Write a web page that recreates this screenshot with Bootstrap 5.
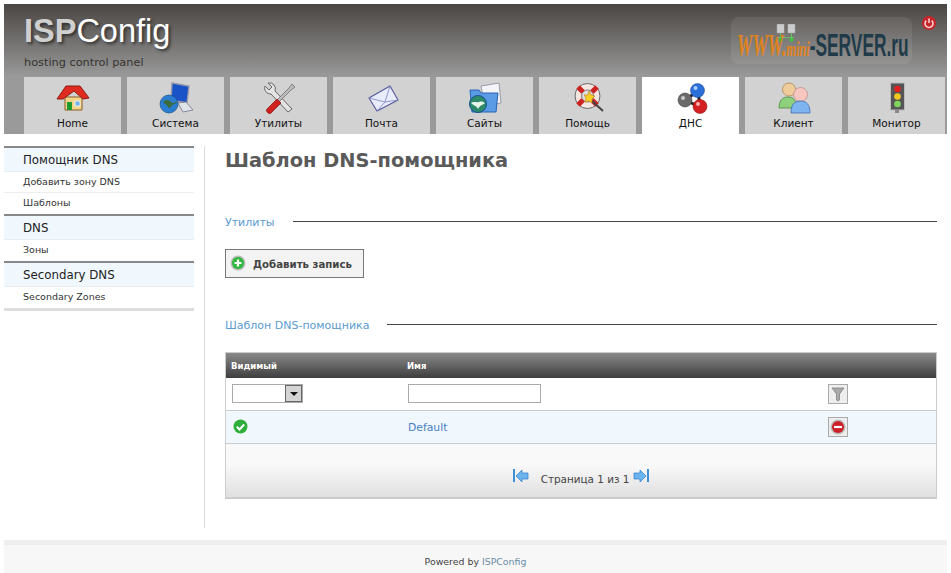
<!DOCTYPE html>
<html lang="ru">

<head>
  <meta charset="UTF-8">
  <title>ISPConfig</title>
  <link href="https://cdn.jsdelivr.net/npm/bootstrap@5.3.3/dist/css/bootstrap.min.css" rel="stylesheet">
  <style>
    html, body { height: 573px; overflow: hidden; }
    body { font-family: "DejaVu Sans", sans-serif; font-size: 11px; color: #444; background: #fff; }
    .page-wrap { width: 943px; margin: 4px 0 0 4px; }

    .top-head { position: relative; height: 130px; background: linear-gradient(#4a4643, #9a9a9a 73px, #9a9a9a); }
    .logo-text { padding: 9px 0 0 20px; height: 73px; }
    .brand-name { font-family: "Liberation Sans", sans-serif; font-size: 32.5px; line-height: 36px; color: #fff; text-shadow: 2px 2px 3px #333; }
    .brand-name b { color: #cfcfcf; }
    .brand-sub { font-size: 11.3px; line-height: 14px; margin-top: 7px; color: #36332f; }
    .promo { position: absolute; left: 727px; top: 13px; width: 181px; height: 47px; border-radius: 8px; background: rgba(255,255,255,.08); }
    .promo-text { position: absolute; left: 6px; top: 12px; white-space: nowrap; font-family: "Liberation Sans", sans-serif; font-weight: 700; font-size: 31px; line-height: 34px; transform: scaleX(.56); transform-origin: 0 0; color: #1f3a48; }
    .promo-text i { color: #e0831c; font-family: "Liberation Serif", serif; }
    .promo-text small { font-size: 22px; color: #e0831c; font-style: italic; font-family: "Liberation Serif", serif; }
    .power-btn { position: absolute; left: 918px; top: 12px; }

    .tab-row { gap: 6px; padding-left: 20px; }
    .tab-item { width: 97px; height: 57px; background: #d2d2d2; color: #111; text-decoration: none; text-align: center; }
    .tab-item.on { background: #fff; }
    .tab-item svg { display: block; margin: 5px auto 0; height: 33px; width: 36px; }
    .tab-item span { display: block; line-height: 14px; margin-top: 1px; font-size: 10.5px; }

    .body-row { height: 406px; padding-top: 12px; }
    .side-col { width: 190px; }
    .side-head { border-top: 2px solid #888; border-bottom: 1px solid #e8eef2; background: #f0f7fd; height: 26px; padding-left: 19px; font-size: 11.8px; line-height: 24px; color: #222; font-weight: 400; margin: 0; }
    .side-link { display: block; height: 21px; border-bottom: 1px solid #eee; padding-left: 19px; line-height: 20px; font-size: 9.5px; color: #333; text-decoration: none; }
    .side-link.last-one { border: 0; }
    .side-end { height: 3px; background: #ddd; }
    .main-col { width: 733px; margin-left: 10px; border-left: 1px solid #ddd; height: 382px; padding-left: 20px; }
    .main-title { font-weight: 700; font-size: 19.4px; line-height: 30px; margin: 0; color: #5a5a5a; }

    .legend-row { color: #5b9bd0; font-size: 11px; line-height: 16px; gap: 18px; }
    .legend-row hr { flex-grow: 1; margin: 6px 0 0; opacity: 1; border-top: 1px solid #444; }
    .add-btn { width: 139px; height: 29px; border: 1px solid #777; border-radius: 0; background: #f3f3f3; display: flex; align-items: center; padding: 2px 0 0 4px; gap: 7px; font-weight: 700; font-size: 10.2px; color: #444; }
    .add-btn svg { margin-top: -3px; }

    .data-box { width: 712px; border: 1px solid #ccc; border-bottom-width: 2px; }
    .data-table { margin: 0; table-layout: fixed; font-size: 11px; }
    .data-table > thead > tr > th { height: 25px; padding: 2px 5px 0; border: 0; color: #fff; font-size: 8.5px; font-weight: 700; background: linear-gradient(#8a8a8a, #3e3e3e); box-shadow: none; vertical-align: middle; }
    .data-table > tbody > tr > td { padding: 0 6px; vertical-align: middle; border-bottom: 1px solid #ccc; box-shadow: none; background: transparent; }
    .filter-line { height: 32px; }
    .value-line { height: 33px; background: #f0f7fd; }
    .fake-select { width: 71px; height: 19px; border: 1px solid #aaa; background: #fff; display: flex; justify-content: flex-end; }
    .fake-arrow { width: 17px; height: 17px; background: #d4d4d4; border: 1px solid #666; display: flex; align-items: center; justify-content: center; }
    .fake-arrow::after { content: ""; border: 4px solid transparent; border-top: 4px solid #111; border-bottom: 0; }
    .filter-input { width: 133px; height: 19px; border: 1px solid #aaa; display: block; padding: 0 2px; }
    .icon-btn { width: 20px; height: 20px; padding: 0; border: 1px solid #aaa; border-radius: 0; background: #eee; display: flex; align-items: center; justify-content: center; }
    .name-link { display: inline-block; padding-top: 3px; color: #4a7fc4; text-decoration: none; font-size: 10.8px; }
    .pager { height: 53px; background: linear-gradient(#f9f9f9 20px, #e0e0e0); padding-top: 24px; gap: 4px; font-size: 10.4px; color: #444; }
    .pager span { margin-top: 4px; }

    .foot-bar { height: 33px; border-top: 5px solid #eee; background: #f7f7f7; text-align: center; font-size: 9.4px; color: #444; padding-top: 10px; line-height: 14px; }
    .foot-bar a { color: #6a8ca8; text-decoration: none; }
  </style>
</head>

<body>
  <div class="page-wrap">
    <div class="top-head">
      <div class="logo-text">
        <div class="brand-name"><b>ISP</b>Config</div>
        <div class="brand-sub">hosting control panel</div>
      </div>

      <div class="promo">
        <svg style="position:absolute;left:45px;top:7px" width="20" height="20" viewBox="0 0 22 22">
          <rect x="1" y="0" width="8" height="10" fill="#ccc" stroke="#888" stroke-width=".5"/>
          <rect x="13" y="0" width="8" height="10" fill="#ccc" stroke="#888" stroke-width=".5"/>
          <path d="M5 10v9M17 10v9M2 15h18" stroke="#6c6" stroke-width="1"/>
          <rect x="3" y="16" width="4" height="3" fill="#3c3"/><rect x="15" y="16" width="4" height="3" fill="#3c3"/>
        </svg>
        <div class="promo-text"><i>WWW.</i><small>mini</small>-SERVER.ru</div>
      </div>

      <a class="power-btn" href="#">
        <svg width="14" height="14" viewBox="0 0 14 14" class="d-block">
          <circle cx="7" cy="7" r="7" fill="#c8252a"/>
          <path d="M4.300 4.600a4 4 0 1 0 5.400 0" fill="none" stroke="#fbdada" stroke-width="1.500"/>
          <path d="M7 2.500v4.500" stroke="#fbdada" stroke-width="1.500"/>
        </svg>
      </a>

      <nav class="d-flex tab-row">
        <a class="tab-item" href="#">
          <svg viewBox="0 0 36 33">
            <path d="M10 15h17v13H10z" fill="#f2d48a" stroke="#8a5a20"/>
            <path d="M2 17 11 4h14l9 12-6 1-9-8-11 8z" fill="#e02c20" stroke="#8c1a12"/>
            <path d="M12 20h5v8h-5z" fill="#1d9a2e"/>
            <path d="M20 19h5v5h-5z" fill="#6fb2ee" stroke="#fff" stroke-width=".8"/>
          </svg>
          <span>Home</span>
        </a>
        <a class="tab-item" href="#">
          <svg viewBox="0 0 36 33">
            <path d="M14 1l17 3-2 17-16-3z" fill="#1a52c8" stroke="#99a" stroke-width="1.400"/>
            <path d="M20 21l8-1 7 8-10 2z" fill="#dfe4ea" stroke="#889"/>
            <circle cx="11" cy="22" r="9" fill="#2a7dd0" stroke="#14508e" stroke-width=".7"/>
            <path d="M5 20c3-3 6-2 8 0s4 1 6-1c0 3-3 3-5 4-1 3-3 4-4 2-1-2-3-3-5-5z" fill="#3c6b3c"/>
          </svg>
          <span>Система</span>
        </a>
        <a class="tab-item" href="#">
          <svg viewBox="0 0 36 33">
            <path d="M4 4a6 6 0 0 0 6 8L27 30l4-3L14 9a6 6 0 0 0-7-8l4 4-3 3z" fill="#e4e4e4" stroke="#666"/>
            <path d="M31 2l3 3-4 3-12 12-2-2L28 6z" fill="#bbb" stroke="#666" stroke-width=".7"/>
            <path d="M16 17l4 4-10 10c-2 2-6-2-4-4z" fill="#d02020" stroke="#801010" stroke-width=".7"/>
          </svg>
          <span>Утилиты</span>
        </a>
        <a class="tab-item" href="#">
          <svg viewBox="0 0 36 33">
            <path d="M5 16 26 4l8 14-21 11z" fill="#e8ecfc" stroke="#54589c" stroke-width="1.100"/>
            <path d="M5 16l16 4 5-16M13 29l8-9 13-2" fill="none" stroke="#8a8ec4" stroke-width=".9"/>
          </svg>
          <span>Почта</span>
        </a>
        <a class="tab-item" href="#">
          <svg viewBox="0 0 36 33">
            <path d="M14 4 32 1l2 20-16 3z" fill="#f4f4f8" stroke="#99a"/>
            <path d="M3 8h9l2 3h17l-2 19H5z" fill="#5b9be6" stroke="#2a63b0"/>
            <circle cx="11" cy="22" r="8.500" fill="#2c8a6a" stroke="#14508e"/>
            <path d="M4 21c3-2 5 0 8-1s4 0 6 1c-2 2-5 2-7 6-1-3-4-3-7-6z" fill="#e8f4e8"/>
          </svg>
          <span>Сайты</span>
        </a>
        <a class="tab-item" href="#">
          <svg viewBox="0 0 36 33">
            <circle cx="17.500" cy="14" r="12.500" fill="#f4e6e0" stroke="#666"/>
            <circle cx="17.500" cy="14" r="6" fill="#ddd" stroke="#777"/>
            <path d="M8 5l5 5M27 5l-5 5M8 23l5-5M27 23l-5-5" stroke="#cc2222" stroke-width="5"/>
            <path d="M22 19l11 10" stroke="#444" stroke-width="2"/>
            <path d="M19 9l2 4 4 1-3 3 0 4-3-2-4 1 1-4-2-3 4 0z" fill="#f5d020" stroke="#c8761a" stroke-width=".6"/>
          </svg>
          <span>Помощь</span>
        </a>
        <a class="tab-item on" href="#">
          <svg viewBox="0 0 36 33">
            <path d="M12 18 25 9M25 9 27 25M12 18 27 25" stroke="#222" stroke-width="3"/>
            <circle cx="12" cy="18" r="7" fill="#6a6a6a" stroke="#333" stroke-width=".5"/>
            <circle cx="24.500" cy="8.500" r="7" fill="#2a6fd8" stroke="#1a3f90" stroke-width=".5"/>
            <circle cx="27" cy="24.500" r="7" fill="#d42020" stroke="#801010" stroke-width=".5"/>
            <circle cx="10" cy="16" r="2" fill="#ccc"/><circle cx="22.500" cy="6" r="2" fill="#a8d0ff"/><circle cx="25" cy="22" r="2" fill="#ffb0b0"/>
          </svg>
          <span>ДНС</span>
        </a>
        <a class="tab-item" href="#">
          <svg viewBox="0 0 36 33">
            <circle cx="13" cy="7.500" r="6.500" fill="#f0cc9a" stroke="#a87c4a" stroke-width=".7"/>
            <path d="M3 26c0-7 3-11 9-11s8 4 9 11z" fill="#8ed07e" stroke="#4a8c3a" stroke-width=".8"/>
            <circle cx="24.500" cy="12.500" r="7" fill="#f6c6c0" stroke="#b88880" stroke-width=".7"/>
            <path d="M15 31c0-8 3-12 9.500-12S34 23 34 31z" fill="#7eb4f0" stroke="#3a6cb0" stroke-width=".8"/>
          </svg>
          <span>Клиент</span>
        </a>
        <a class="tab-item" href="#">
          <svg viewBox="0 0 36 33">
            <rect x="11.500" y="1" width="14" height="27" fill="#555" stroke="#bbb"/>
            <path d="M16 28h4v3h-4z" fill="#888"/>
            <circle cx="18.500" cy="7" r="3.300" fill="#e02020"/>
            <circle cx="18.500" cy="14.500" r="3.300" fill="#f2c81e"/>
            <circle cx="18.500" cy="22" r="3.300" fill="#7ed45c"/>
          </svg>
          <span>Монитор</span>
        </a>
      </nav>
    </div>

    <div class="d-flex body-row">
      <aside class="side-col">
        <h6 class="side-head">Помощник DNS</h6>
        <a class="side-link" href="#">Добавить зону DNS</a>
        <a class="side-link last-one" href="#">Шаблоны</a>
        <h6 class="side-head">DNS</h6>
        <a class="side-link last-one" href="#">Зоны</a>
        <h6 class="side-head">Secondary DNS</h6>
        <a class="side-link last-one" href="#">Secondary Zones</a>
        <div class="side-end"></div>
      </aside>

      <main class="main-col">
        <h1 class="main-title">Шаблон DNS-помощника</h1>

        <div class="d-flex align-items-start legend-row" style="margin-top:39px">
          <span>Утилиты</span><hr>
        </div>

        <button class="btn add-btn" type="button" style="margin-top:18px">
          <svg width="16" height="16" viewBox="0 0 16 16">
            <circle cx="8" cy="8" r="7.500" fill="#bbb"/>
            <circle cx="8" cy="8" r="6" fill="#2fb83c"/>
            <path d="M8 4.500v7M4.500 8h7" stroke="#fff" stroke-width="2.200"/>
          </svg>
          Добавить запись
        </button>

        <div class="d-flex align-items-start legend-row" style="margin-top:40px">
          <span>Шаблон DNS-помощника</span><hr>
        </div>

        <div class="data-box" style="margin-top:18px">
          <table class="table data-table">
            <colgroup><col style="width:176px"><col><col style="width:114px"></colgroup>
            <thead>
              <tr><th>Видимый</th><th>Имя</th><th></th></tr>
            </thead>
            <tbody>
              <tr class="filter-line">
                <td><div class="fake-select"><div class="fake-arrow"></div></div></td>
                <td><input class="filter-input" type="text"></td>
                <td>
                  <button class="btn icon-btn" type="button">
                    <svg width="14" height="16" viewBox="0 0 14 16"><path d="M1 2h12L8.500 8v6L7 15l-1.500-1V8z" fill="#aaa" stroke="#777" stroke-width=".7"/></svg>
                  </button>
                </td>
              </tr>
              <tr class="value-line">
                <td>
                  <svg width="15" height="15" viewBox="0 0 15 15" class="d-block" style="margin-left:1px">
                    <circle cx="7.500" cy="7.500" r="7" fill="#2fae3c"/>
                    <path d="M3.800 7.800l2.700 2.700 4.700-5" fill="none" stroke="#fff" stroke-width="2"/>
                  </svg>
                </td>
                <td><a class="name-link" href="#">Default</a></td>
                <td>
                  <button class="btn icon-btn" type="button">
                    <svg width="16" height="16" viewBox="0 0 16 16">
                      <circle cx="8" cy="8" r="7.500" fill="#bbb"/>
                      <circle cx="8" cy="8" r="6" fill="#cc2028"/>
                      <path d="M4 8h8" stroke="#fff" stroke-width="2.200"/>
                    </svg>
                  </button>
                </td>
              </tr>
            </tbody>
          </table>
          <div class="pager d-flex justify-content-center align-items-start">
            <svg width="17" height="16" viewBox="0 0 17 16" style="margin-right:8px">
              <path d="M1 1h2v13H1z" fill="#3d8fd8"/>
              <path d="M4 8l6-6v3h6v6h-6v3z" fill="#6cb4ee" stroke="#2c7cc8" stroke-width=".7"/>
            </svg>
            <span>Страница 1 из 1</span>
            <svg width="17" height="16" viewBox="0 0 17 16">
              <path d="M14 1h2v13h-2z" fill="#3d8fd8"/>
              <path d="M13 8L7 2v3H1v6h6v3z" fill="#6cb4ee" stroke="#2c7cc8" stroke-width=".7"/>
            </svg>
          </div>
        </div>
      </main>
    </div>

    <footer class="foot-bar">Powered by <a href="#">ISPConfig</a></footer>
  </div>

  <script src="https://cdn.jsdelivr.net/npm/bootstrap@5.3.3/dist/js/bootstrap.bundle.min.js"></script>
</body>

</html>
